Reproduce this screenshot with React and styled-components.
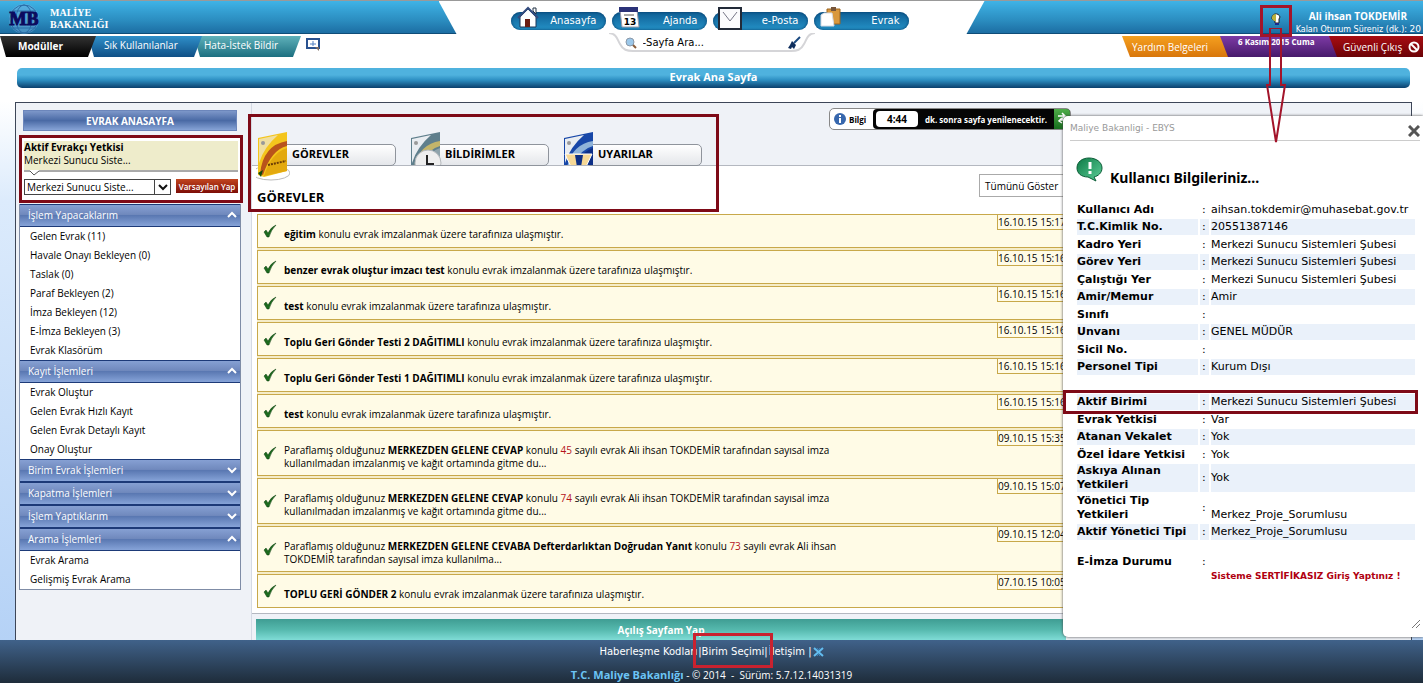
import React from 'react'
import styled, { createGlobalStyle, css } from 'styled-components'

const sans = '"Open Sans", "Noto Sans", sans-serif'
const wide = '"DejaVu Sans", sans-serif'

const menu = [
  {
    title: 'İşlem Yapacaklarım',
    open: true,
    items: ['Gelen Evrak (11)', 'Havale Onayı Bekleyen (0)', 'Taslak (0)', 'Paraf Bekleyen (2)', 'İmza Bekleyen (12)', 'E-İmza Bekleyen (3)', 'Evrak Klasörüm'],
  },
  {
    title: 'Kayıt İşlemleri',
    open: true,
    items: ['Evrak Oluştur', 'Gelen Evrak Hızlı Kayıt', 'Gelen Evrak Detaylı Kayıt', 'Onay Oluştur'],
  },
  { title: 'Birim Evrak İşlemleri', items: [] },
  { title: 'Kapatma İşlemleri', items: [] },
  { title: 'İşlem Yaptıklarım', items: [] },
  { title: 'Arama İşlemleri', open: true, items: ['Evrak Arama', 'Gelişmiş Evrak Arama'] },
]

const waiting = 'konulu evrak imzalanmak üzere tarafınıza ulaşmıştır.'

const tasks = [
  { date: '16.10.15 15:17', subject: 'eğitim' },
  { date: '16.10.15 15:16', subject: 'benzer evrak oluştur imzacı test' },
  { date: '16.10.15 15:16', subject: 'test' },
  { date: '16.10.15 15:16', subject: 'Toplu Geri Gönder Testi 2 DAĞITIMLI' },
  { date: '16.10.15 15:16', subject: 'Toplu Geri Gönder Testi 1 DAĞITIMLI' },
  { date: '16.10.15 15:16', subject: 'test' },
  { date: '09.10.15 15:35', subject: 'MERKEZDEN GELENE CEVAP', no: 45, tail: ['sayılı evrak Ali ihsan TOKDEMİR tarafından sayısal imza', 'kullanılmadan imzalanmış ve kağıt ortamında gitme du...'] },
  { date: '09.10.15 15:07', subject: 'MERKEZDEN GELENE CEVAP', no: 74, tail: ['sayılı evrak Ali ihsan TOKDEMİR tarafından sayısal imza', 'kullanılmadan imzalanmış ve kağıt ortamında gitme du...'] },
  { date: '09.10.15 12:04', subject: 'MERKEZDEN GELENE CEVABA Defterdarlıktan Doğrudan Yanıt', no: 73, tail: ['sayılı evrak Ali ihsan', 'TOKDEMİR tarafından sayısal imza kullanılma...'] },
  { date: '07.10.15 10:05', subject: 'TOPLU GERİ GÖNDER 2' },
]

const user = [
  ['Kullanıcı Adı', 'aihsan.tokdemir@muhasebat.gov.tr'],
  ['T.C.Kimlik No.', '20551387146'],
  ['Kadro Yeri', 'Merkezi Sunucu Sistemleri Şubesi'],
  ['Görev Yeri', 'Merkezi Sunucu Sistemleri Şubesi'],
  ['Çalıştığı Yer', 'Merkezi Sunucu Sistemleri Şubesi'],
  ['Amir/Memur', 'Amir'],
  ['Sınıfı', ''],
  ['Unvanı', 'GENEL MÜDÜR'],
  ['Sicil No.', ''],
  ['Personel Tipi', 'Kurum Dışı'],
  null,
  ['Aktif Birimi', 'Merkezi Sunucu Sistemleri Şubesi'],
  ['Evrak Yetkisi', 'Var'],
  ['Atanan Vekalet', 'Yok'],
  ['Özel İdare Yetkisi', 'Yok'],
  ['Askıya Alınan\nYetkileri', 'Yok'],
  ['Yönetici Tip\nYetkileri', 'Merkez_Proje_Sorumlusu'],
  ['Aktif Yönetici Tipi', 'Merkez_Proje_Sorumlusu'],
]

function App() {
  return (
    <Page>
      <Global />
      <Header>
        <Brand>
          <LogoIcon />
          <BrandName>MALİYE<br />BAKANLIĞI</BrandName>
        </Brand>
        <Nav>
          <NavLink href="#"><NavIcon><HouseIcon /></NavIcon>Anasayfa</NavLink>
          <NavLink href="#"><NavIcon><CalendarIcon /></NavIcon>Ajanda</NavLink>
          <NavLink href="#"><NavIcon><MailIcon /></NavIcon>e-Posta</NavLink>
          <NavLink href="#"><NavIcon><ClipboardIcon /></NavIcon>Evrak</NavLink>
        </Nav>
        <UserArea>
          <UserButton aria-label="Kullanıcı Bilgileri">
            <PersonIcon />
            <ArrowMark viewBox="0 0 20 116">
              <path d="M4 0V57H1L10 114L19 57H15V0Z" />
            </ArrowMark>
          </UserButton>
          <UserText>
            <UserName>Ali ihsan TOKDEMİR</UserName>
            <Session>Kalan Oturum Süreniz (dk.): <b>20</b></Session>
          </UserText>
        </UserArea>
      </Header>

      <SubBar>
        <TabGroup>
          <TopTab href="#" $kind="black">Modüller</TopTab>
          <TopTab href="#" $kind="blue">Sık Kullanılanlar</TopTab>
          <TopTab href="#" $kind="teal">Hata-İstek Bildir</TopTab>
          <AddButton aria-label="Ekle"><AddIcon /></AddButton>
        </TabGroup>
        <Search>
          <SearchEdge />
          <GlassIcon />
          <SearchInput aria-label="Sayfa Ara" defaultValue="-Sayfa Ara..." />
          <BrushIcon />
        </Search>
        <RightTabs>
          <SideTab href="#" $kind="orange">Yardım Belgeleri</SideTab>
          <SideTab as="div" $kind="purple">6 Kasım 2015 Cuma</SideTab>
          <SideTab href="#" $kind="red">Güvenli Çıkış <BanIcon /></SideTab>
        </RightTabs>
      </SubBar>

      <TitleBar>Evrak Ana Sayfa</TitleBar>

      <Panel>
        <Sidebar>
          <HomeButton>EVRAK ANASAYFA</HomeButton>
          <RoleBox>
            <RoleNote>
              <b>Aktif Evrakçı Yetkisi</b>
              <span>Merkezi Sunucu Siste...</span>
            </RoleNote>
            <Notch viewBox="0 0 214 6"><path d="M0 1H6L10 5L15 1H214" /></Notch>
            <RoleForm>
              <SelectWrap>
                <RoleSelect aria-label="Aktif Evrakçı Yetkisi">
                  <option>Merkezi Sunucu Siste...</option>
                </RoleSelect>
                <SelectArrow><Chevron down dark /></SelectArrow>
              </SelectWrap>
              <DefaultButton>Varsayılan Yap</DefaultButton>
            </RoleForm>
          </RoleBox>
          <Menu>
            {menu.map((group) => (
              <div key={group.title}>
                <GroupHead aria-expanded={!!group.open}>
                  {group.title}
                  <Chevron down={!group.open} />
                </GroupHead>
                {group.items.map((item) => <MenuLink href="#" key={item}>{item}</MenuLink>)}
              </div>
            ))}
          </Menu>
        </Sidebar>

        <Main>
          <TabsArea>
            <TypeTab><FolderIcon kind="task" />GÖREVLER</TypeTab>
            <TypeTab><FolderIcon kind="clock" />BİLDİRİMLER</TypeTab>
            <TypeTab><FolderIcon kind="warn" />UYARILAR</TypeTab>
            <Info>
              <InfoLabel><InfoIcon />Bilgi</InfoLabel>
              <InfoBody>
                <Timer>4:44</Timer>
                <span>dk. sonra sayfa yenilenecektir.</span>
                <Refresh aria-label="Yenile"><RefreshIcon /></Refresh>
              </InfoBody>
            </Info>
          </TabsArea>
          <ListBox>
            <ListHead>
              <h2>GÖREVLER</h2>
              <ShowAll>Tümünü Göster</ShowAll>
            </ListHead>
            <List>
              {tasks.map((task, i) => (
                <Task key={i}>
                  <CheckIcon />
                  {task.no ? (
                    <p>
                      Paraflamış olduğunuz <b>{task.subject}</b> konulu <em>{task.no}</em> {task.tail[0]}
                      <br />
                      {task.tail[1]}
                    </p>
                  ) : (
                    <p><b>{task.subject}</b> {waiting}</p>
                  )}
                  <time>{task.date}</time>
                </Task>
              ))}
            </List>
          </ListBox>
          <OpenPage>Açılış Sayfam Yap</OpenPage>
          <TabsMark />
        </Main>
      </Panel>

      <Footer>
        <FooterLinks>
          <a href="#">Haberleşme Kodları</a>
          <UnitLink href="#">|Birim Seçimi|</UnitLink>
          <a href="#">İletişim |</a>
          <CrossIcon />
        </FooterLinks>
        <Copyright><b>T.C. Maliye Bakanlığı</b> - © 2014 &nbsp;-&nbsp; <span>Sürüm: 5.7.12.14031319</span></Copyright>
      </Footer>

      <Popup role="dialog" aria-label="Kullanıcı Bilgileriniz">
        <PopupTop>
          Maliye Bakanligi - EBYS
          <CloseButton aria-label="Kapat">
            <svg width="12" height="12" viewBox="0 0 12 12"><path d="M1 1L11 11M11 1L1 11" stroke="#555" strokeWidth="3" /></svg>
          </CloseButton>
        </PopupTop>
        <PopupHead>
          <BubbleIcon />
          <h3>Kullanıcı Bilgileriniz...</h3>
        </PopupHead>
        <UserTable>
          <tbody>
            {user.map((row, i) => row ? (
              <UserRow key={i} $low={row[0].startsWith('Yönetici')}>
                <th scope="row">{row[0]}{row[0] === 'Aktif Birimi' && <RowMark />}</th>
                <td>:</td>
                <td>{row[1]}</td>
              </UserRow>
            ) : <UserRow key={i}><td colSpan="3" /></UserRow>)}
            <SignRow>
              <th scope="row">E-İmza Durumu</th>
              <td>:</td>
              <td>Sisteme SERTİFİKASIZ Giriş Yaptınız !</td>
            </SignRow>
          </tbody>
        </UserTable>
        <Grip viewBox="0 0 10 10"><path d="M1 9L9 1M5 9L9 5" /></Grip>
      </Popup>
    </Page>
  )
}

/* icons */

function LogoIcon() {
  return (
    <svg width="36" height="32" viewBox="0 0 36 32">
      <circle cx="18" cy="16" r="15" fill="#6fb2e2" opacity="0.5" />
      <g fill="none" stroke="#2a6ea8" strokeWidth="1">
        <circle cx="18" cy="16" r="14" />
        <ellipse cx="18" cy="16" rx="8" ry="14" />
        <path d="M6 8H30M6 25H30" />
      </g>
      <text x="18" y="22" textAnchor="middle" fontFamily="Liberation Serif, serif" fontWeight="bold" fontSize="18" fill="#0b0b5e" stroke="#0b0b5e">MB</text>
    </svg>
  )
}

function HouseIcon() {
  return (
    <svg width="24" height="24" viewBox="0 0 24 24">
      <path d="M17 2H20V8L17 5Z" fill="#fff" stroke="#234" />
      <path d="M4 11L12 3L20 11V21H4Z" fill="#fff" stroke="#1d3658" />
      <path d="M2 12L12 2L22 12" fill="none" stroke="#334b7e" strokeWidth="2" />
      <path d="M9 13H14V21H9Z" fill="#6b1d12" />
    </svg>
  )
}

function CalendarIcon() {
  return (
    <svg width="24" height="24" viewBox="0 0 24 24">
      <path d="M3 4H20L22 21H5Z" fill="#fff" stroke="#99a" />
      <path d="M2 1H21V6H2Z" fill="#2b3278" />
      <path d="M7 9H17" stroke="#555" />
      <text x="13" y="19" textAnchor="middle" fontFamily="DejaVu Sans, sans-serif" fontWeight="bold" fontSize="9">13</text>
    </svg>
  )
}

function MailIcon() {
  return (
    <svg width="24" height="24" viewBox="0 0 24 24">
      <path d="M1 2H23V23H1Z" fill="#fbfbfd" stroke="#222a38" strokeWidth="2" />
      <path d="M5 6L12 15L19 6" fill="none" stroke="#778" strokeWidth="1" />
    </svg>
  )
}

function ClipboardIcon() {
  return (
    <svg width="24" height="24" viewBox="0 0 24 24">
      <path d="M8 3H21V18H8Z" fill="#d9983d" stroke="#9c6421" />
      <path d="M12 1H17V5H12Z" fill="#76553a" />
      <path d="M2 9L5 7H13L15 20H2Z" fill="#fff" stroke="#d5dbe5" />
    </svg>
  )
}

function PersonIcon() {
  return (
    <svg width="12" height="14" viewBox="0 0 12 14">
      <path d="M2 7A4 4 0 0 1 10 5L9 7V11H5V9Z" fill="#fff" stroke="#222" />
      <path d="M2 7A4 4 0 0 1 6 2V9H4Z" fill="#b9b13b" />
      <path d="M5 11H9V13H5Z" fill="#1a2a8c" />
    </svg>
  )
}

function AddIcon() {
  return (
    <svg width="14" height="14" viewBox="0 0 14 14">
      <path d="M1 1H13V10H1Z" fill="#fff" stroke="#2a5290" strokeWidth="2" />
      <path d="M7 3V8M4 6H10" stroke="#4f7ec2" />
      <path d="M9 9H13V13Z" fill="#7d6c63" />
    </svg>
  )
}

function GlassIcon() {
  return (
    <svg width="12" height="12" viewBox="0 0 12 12">
      <path d="M7 7L11 11" stroke="#8a5d3a" strokeWidth="2" />
      <circle cx="5" cy="5" r="4" fill="#9cc8ea" stroke="#8a98a8" />
    </svg>
  )
}

function BrushIcon() {
  return (
    <svg width="14" height="14" viewBox="0 0 14 14">
      <path d="M13 1L7 7" stroke="#1a4a80" strokeWidth="2" />
      <path d="M5 5L9 9L7 13L5 11L4 13L1 12L3 9Z" fill="#0e2d5c" />
    </svg>
  )
}

function BanIcon() {
  return (
    <svg width="12" height="12" viewBox="0 0 12 12">
      <g fill="none" stroke="#fff" strokeWidth="2"><circle cx="6" cy="6" r="4.5" /><path d="M3 3L9 9" /></g>
    </svg>
  )
}

function Chevron({ down, dark }) {
  return (
    <svg width="10" height="8" viewBox="0 0 10 8">
      <path d={down ? 'M1 2L5 6L9 2' : 'M1 6L5 2L9 6'} fill="none" stroke={dark ? '#111' : '#fff'} strokeWidth="2" />
    </svg>
  )
}

const folderColors = {
  task: ['#f4c51d', '#b9541b', '#e3a90f'],
  clock: ['#5f7f8c', '#c3b56a', '#8fa3ab'],
  warn: ['#1747a8', '#8fb3d9', '#0d2f86'],
}

function FolderIcon({ kind }) {
  const [fill, band, deep] = folderColors[kind]
  return (
    <svg width="34" height="50" viewBox="0 0 34 50">
      {kind === 'task' && <ellipse cx="15" cy="42" rx="19" ry="7" fill="#fff" stroke="#bbb" />}
      <path d="M2 7L31 1V40L8 46L2 44Z" fill={fill} />
      <path d="M3 8L22 4Q8 16 3 32Z" fill={kind === 'task' ? '#f0dfa0' : '#e9edf1'} />
      <path d="M4 43Q7 14 31 10V15Q15 19 7 44Z" fill={band} />
      <path d="M31 17Q15 22 8 45L31 40Z" fill={deep} />
      <circle cx="7" cy="12" r="2" fill="#999" />
      {kind === 'task' && <path d="M12 34L30 30" stroke="#6b3c05" strokeWidth="2" strokeDasharray="2 1" />}
      {kind === 'task' && <path d="M2 42L7 39L5 46Z" fill="#104a10" />}
      {kind === 'clock' && (
        <g>
          <circle cx="19" cy="32" r="13" fill="#eee" stroke="#b5b9bd" />
          <path d="M18 24V33H25" fill="none" stroke="#222" strokeWidth="2" />
        </g>
      )}
      {kind === 'warn' && (
        <g>
          <path d="M3 23H30L23 38H10Z" fill="#f6d896" stroke="#fff" />
          <path d="M13 24H21L19 36H15Z" fill="#0d2f86" />
        </g>
      )}
    </svg>
  )
}

function CheckIcon() {
  return (
    <svg width="14" height="14" viewBox="0 0 14 14">
      <path d="M1 8L3 6L5 9Q8 3 13 1Q8 6 6 13H4Z" fill="#1c6a1c" stroke="#0e3f12" strokeWidth="0.5" />
    </svg>
  )
}

function InfoIcon() {
  return (
    <svg width="12" height="12" viewBox="0 0 12 12">
      <circle cx="6" cy="6" r="6" fill="#3767ad" />
      <path d="M6 2V4M6 5V10" stroke="#fff" strokeWidth="2" />
    </svg>
  )
}

function RefreshIcon() {
  return (
    <svg width="10" height="12" viewBox="0 0 10 12">
      <path d="M1 4H7M5 1L8 4L5 7M9 8H3M5 6L2 9L5 11" fill="none" stroke="#fff" strokeWidth="1.5" />
    </svg>
  )
}

function CrossIcon() {
  return (
    <svg width="11" height="10" viewBox="0 0 11 10">
      <path d="M1 1L10 9M10 1L1 9" stroke="#63bdf0" strokeWidth="2" />
      <path d="M4 1L5.500 3L7 1M4 9L5.500 7L7 9" fill="none" stroke="#3c86c0" />
    </svg>
  )
}

function BubbleIcon() {
  return (
    <svg width="27" height="25" viewBox="0 0 27 25">
      <defs>
        <linearGradient id="bubble" x1="0" y1="0" x2="1" y2="1">
          <stop offset="0" stopColor="#0c7a45" />
          <stop offset="1" stopColor="#5fd09a" />
        </linearGradient>
      </defs>
      <path d="M13 1C20 1 26 5 26 11C26 16 22 19 18 20L20 24L12 20C5 20 1 16 1 11C1 5 6 1 13 1Z" fill="url(#bubble)" stroke="#0b5c36" />
      <path d="M14 5V12M14 14V17" stroke="#fff" strokeWidth="3" />
    </svg>
  )
}

function SearchEdge() {
  return (
    <Edge viewBox="0 0 206 20" preserveAspectRatio="none">
      <path d="M0 0C8 1 8 6 11 11C14 17 18 18 24 18H182C188 18 192 17 195 11C198 6 198 1 206 0" fill="#fff" stroke="#d5d5d8" strokeWidth="2" />
    </Edge>
  )
}

/* styles */

const Global = createGlobalStyle`
  * { box-sizing: border-box; }
  body { margin: 0; background: #fff; font-family: ${sans}; font-size: 10px; color: #000; }
  a { color: inherit; text-decoration: none; }
  button { border: 0; padding: 0; background: none; font: inherit; color: inherit; cursor: pointer; }
  h2, h3, p { margin: 0; }
  svg { flex: none; }
`

const mark = css`
  position: absolute;
  border: 3px solid #7e0a17;
  pointer-events: none;
`

const Page = styled.div`
  position: relative;
  overflow: hidden;
  border-top: 1px solid #999;
  background: linear-gradient(#fff 100px, #dcebfc 200px, #b5d2f6 640px);
`

const Header = styled.header`
  display: grid;
  grid-template-columns: minmax(0, 1fr) 546px minmax(0, 1fr);
  height: 33px;
  background: linear-gradient(#3fb3e6, #2b8dc0 60%, #1c6ea3);
  border-bottom: 1px solid #0f4d78;
`

const Brand = styled.div`
  display: flex;
  align-items: center;
  gap: 8px;
  padding-left: 6px;
`

const BrandName = styled.div`
  font: bold 10px/12px "Liberation Serif", serif;
  color: #fff;
`

const Nav = styled.nav`
  display: flex;
  justify-content: center;
  gap: 6px;
  height: 33px;
  padding: 11px 4px 0 0;
  background: #fff;
  clip-path: polygon(0 0, 100% 0, calc(100% - 18px) 100%, 18px 100%);
`

const NavLink = styled.a`
  display: flex;
  align-items: center;
  justify-content: flex-end;
  position: relative;
  width: 95px;
  height: 18px;
  padding-right: 9px;
  border-radius: 9px;
  background: linear-gradient(#0f5f95, #2491c6);
  box-shadow: inset 0 0 3px #053a66;
  color: #fff;
  font: 10px/18px ${wide};
`

const NavIcon = styled.span`
  position: absolute;
  left: 5px;
  top: -6px;
  height: 24px;
`

const UserArea = styled.div`
  display: flex;
  justify-content: flex-end;
  gap: 4px;
  color: #fff;
`

const UserButton = styled.button`
  position: relative;
  z-index: 5;
  display: flex;
  align-items: center;
  justify-content: center;
  width: 32px;
  height: 32px;
  margin-top: 4px;
  padding-bottom: 4px;
  border: 3px solid #a3142a;
`

const ArrowMark = styled.svg`
  position: absolute;
  left: 3px;
  top: 20px;
  width: 20px;
  height: 116px;
  fill: none;
  stroke: #a3142a;
  stroke-width: 2;
  pointer-events: none;
`

const UserText = styled.div`
  padding: 8px 2px 0 0;
  text-align: right;
  white-space: nowrap;
`

const UserName = styled.div`
  padding-right: 14px;
  font-size: 10px;
  line-height: 14px;
  font-weight: bold;
`

const Session = styled.div`
  font: 8px/12px ${wide};

  b {
    font-size: 9px;
    font-weight: normal;
  }
`

const SubBar = styled.div`
  display: flex;
  justify-content: space-between;
  margin-top: 2px;
  height: 21px;
`

const TabGroup = styled.div`
  display: flex;
  flex: 1;
`

const tabColors = {
  black: 'linear-gradient(#333, #000)',
  blue: 'linear-gradient(#2f8fc9, #0f4f85)',
  teal: 'linear-gradient(#5fb1ba, #1c6f80)',
  orange: 'linear-gradient(#f5a01f, #d8760b)',
  purple: 'linear-gradient(#7d3aa5, #471a6b)',
  red: 'linear-gradient(#a80d12, #6b0206)',
}

const topTabs = {
  black: css`width: 96px; z-index: 3; padding-left: 18px; font-weight: bold; line-height: 20px;`,
  blue: css`width: 114px; z-index: 2; padding-left: 16px;`,
  teal: css`width: 107px; z-index: 1; padding-left: 10px;`,
}

const TopTab = styled.a`
  position: relative;
  margin-right: -8px;
  background: ${(p) => tabColors[p.$kind]};
  clip-path: polygon(0 0, 100% 0, calc(100% - 8px) 100%, 6px 100%);
  color: #fff;
  font-size: 10px;
  line-height: 18px;
  white-space: nowrap;
  ${(p) => topTabs[p.$kind]}
`

const AddButton = styled.button`
  height: 14px;
  margin: 2px 0 0 13px;
`

const Search = styled.div`
  position: relative;
  display: flex;
  align-items: center;
  width: 206px;
  height: 20px;
  margin-top: -3px;
  padding: 0 14px 0 16px;

  svg:not(:first-child) { position: relative; }
`

const Edge = styled.svg`
  position: absolute;
  inset: 0;
  width: 100%;
  height: 100%;
`

const SearchInput = styled.input`
  position: relative;
  flex: 1;
  min-width: 0;
  padding: 0 6px;
  border: 0;
  background: none;
  font: 10px/16px ${wide};
`

const RightTabs = styled(TabGroup)`
  justify-content: flex-end;
`

const SideTab = styled.a`
  display: flex;
  justify-content: space-between;
  align-items: center;
  width: ${(p) => (p.$kind === 'red' ? '94px' : p.$kind === 'purple' ? '117px' : '106px')};
  margin-left: ${(p) => (p.$kind === 'orange' ? 0 : '-8px')};
  padding: 0 3px 0 ${(p) => (p.$kind === 'purple' ? '18px' : p.$kind === 'red' ? '14px' : '10px')};
  background: ${(p) => tabColors[p.$kind]};
  clip-path: polygon(0 0, 100% 0, 100% 100%, 8px 100%);
  color: #fff;
  font-size: 10px;
  white-space: nowrap;
  ${(p) => p.$kind === 'purple' && 'align-items: flex-start; font-size: 8px; font-weight: bold;'}
`

const TitleBar = styled.h1`
  height: 20px;
  margin: 11px 13px 14px 17px;
  border-radius: 5px;
  background: linear-gradient(#4fb2de 0 35%, #2d8fc2 60%, #0a3f6c);
  color: #fff;
  font-size: 11px;
  line-height: 17px;
  text-align: center;
`

const Panel = styled.div`
  display: grid;
  grid-template-columns: 236px minmax(0, 1fr) 340px;
  margin: 0 11px 0 15px;
  border: 1px solid #3d4658;
  border-bottom: 0;
  background: #eff2f7;
`

const Sidebar = styled.aside`
  padding: 7px 10px 0 3px;
  border-right: 1px solid #d5dae4;
`

const HomeButton = styled.button`
  display: block;
  width: 214px;
  height: 21px;
  margin: 0 4px 4px;
  border: 1px solid #6c86bb;
  background: linear-gradient(#7d97c9, #4a6aa5 50%, #86a3d6);
  color: #fff;
  font-weight: bold;
`

const RoleBox = styled.div`
  width: 224px;
  height: 68px;
  padding: 3px 2px;
  border: 3px solid #7e0a17;
  background: #fff;
`

const RoleNote = styled.div`
  display: flex;
  flex-direction: column;
  height: 29px;
  background: #eeeccb;
  line-height: 13px;
`

const Notch = styled.svg`
  display: block;
  width: 100%;
  height: 6px;
  fill: none;
  stroke: #555;
`

const RoleForm = styled.div`
  display: flex;
  gap: 5px;
  margin-top: 3px;
`

const SelectWrap = styled.div`
  position: relative;
  flex: 1;
`

const RoleSelect = styled.select`
  appearance: none;
  width: 100%;
  height: 16px;
  padding: 0 2px;
  border: 1px solid #444;
  border-radius: 0;
  background: #fff;
  color: #000;
  font: 10px/14px ${sans};
`

const SelectArrow = styled.span`
  position: absolute;
  right: 0;
  top: 0;
  display: flex;
  align-items: center;
  justify-content: center;
  width: 17px;
  height: 16px;
  border: 1px solid #444;
  pointer-events: none;
`

const DefaultButton = styled.button`
  width: 62px;
  height: 14px;
  background: linear-gradient(#c2451f, #7d0d07);
  color: #fff;
  font-size: 8px;
  font-weight: 600;
  white-space: nowrap;
`

const Menu = styled.nav`
  margin-top: 1px;
  border: 1px solid #7f8ca6;
  border-top: 0;
  background: #fff;
`

const GroupHead = styled.button`
  display: flex;
  align-items: center;
  justify-content: space-between;
  width: 100%;
  height: 23px;
  padding: 0 3px 2px 8px;
  border: solid #1d3a78;
  border-width: 1px 0;
  background: linear-gradient(#86a0d3, #7089bd 45%, #5a78b2 50%, #86a3d8);
  color: #fff;
`

const MenuLink = styled.a`
  display: block;
  padding-left: 10px;
  line-height: 19px;
`

const Main = styled.main`
  position: relative;
  display: flex;
  flex-direction: column;
`

const TabsArea = styled.div`
  display: flex;
  align-items: flex-start;
  height: 62px;
  padding: 28px 0 0 4px;
`

const TypeTab = styled.button`
  display: flex;
  align-items: flex-start;
  position: relative;
  z-index: 1;
  width: 141px;
  height: 34px;
  margin-right: 12px;
  padding: 13px 0 0 36px;
  font-size: 11px;
  line-height: 20px;
  font-weight: bold;

  &::before {
    content: '';
    position: absolute;
    left: 24px;
    right: 1px;
    top: 13px;
    height: 20px;
    border: 1px solid #8f949c;
    border-radius: 5px;
    background: linear-gradient(#fff, #e4e6ea);
    z-index: -1;
  }

  svg {
    position: absolute;
    left: 0;
    top: 0;
  }

  &:not(:first-child) svg {
    clip-path: inset(0 0 16px 0);
  }
`

const Info = styled.div`
  display: flex;
  margin: -23px 0 0 auto;
  width: 242px;
  height: 22px;
  border: 1px solid #888;
  border-radius: 5px;
  overflow: hidden;
  background: #fff;
  font-size: 8px;
  font-weight: bold;
`

const InfoLabel = styled.div`
  display: flex;
  flex: none;
  align-items: center;
  gap: 3px;
  width: 43px;
  padding-left: 4px;
`

const InfoBody = styled.div`
  display: flex;
  flex: 1;
  align-items: center;
  justify-content: space-between;
  gap: 4px;
  border-radius: 4px 0 0 4px;
  background: #050505;
  color: #fff;
  white-space: nowrap;
`

const Timer = styled.span`
  width: 42px;
  margin-left: 3px;
  border-radius: 4px;
  background: #fff;
  color: #000;
  font-size: 10px;
  line-height: 16px;
  text-align: center;
`

const Refresh = styled.button`
  width: 16px;
  height: 22px;
  background: linear-gradient(#51b04a, #146b1c);
`

const ListBox = styled.section`
  padding: 0 5px 5px;
  border: solid #b4b8c0;
  border-width: 1px 0;
  background: #fff;
`

const ListHead = styled.div`
  display: flex;
  justify-content: space-between;
  height: 48px;
  padding-top: 8px;

  h2 {
    padding-top: 14px;
    font-size: 13px;
    line-height: 18px;
  }
`

const ShowAll = styled.button`
  width: 87px;
  height: 23px;
  padding: 0 5px;
  border: 1px solid #aaa;
  background: #fff;
  text-align: left;
`

const List = styled.ul`
  display: flex;
  flex-direction: column;
  gap: 2px;
  margin: 0;
  padding: 0;
  list-style: none;
  background: #f5ecc8;
`

const Task = styled.li`
  display: flex;
  align-items: center;
  gap: 7px;
  min-height: 34px;
  padding-left: 5px;
  border: 1px solid #c8a84a;
  background: #fffbe6;

  p {
    flex: 1;
    align-self: flex-start;
    padding: 13px 0 5px;
    line-height: 13px;
  }

  em {
    color: #b5121b;
    font-style: normal;
  }

  time {
    align-self: flex-start;
    width: 68px;
    border: solid #c8a84a;
    border-width: 0 0 1px 1px;
    line-height: 14px;
    white-space: nowrap;
  }
`

const OpenPage = styled.button`
  height: 21px;
  margin: 5px 5px 0 4px;
  background: linear-gradient(#3f9d93, #55b8ad 50%, #7fdcd6);
  color: #fff;
  font-weight: bold;
`

const TabsMark = styled.div`
  ${mark}
  z-index: 2;
  left: -4px;
  top: 11px;
  width: 471px;
  height: 98px;
`

const Footer = styled.footer`
  display: flex;
  flex-direction: column;
  align-items: center;
  height: 43px;
  padding-top: 4px;
  background: linear-gradient(#40628a, #1e2c3a);
  color: #fff;
`

const FooterLinks = styled.div`
  display: flex;
  align-items: center;
  gap: 1px;
  height: 16px;
  font: 10px/16px ${wide};
`

const UnitLink = styled.a`
  position: relative;

  &::after {
    content: '';
    ${mark}
    border-color: #c9222f;
    inset: -11px -5px -8px -5px;
  }
`

const Copyright = styled.div`
  margin-top: 8px;
  font-size: 10px;
  line-height: 14px;

  b { color: #6cc4f5; font-size: 11px; }
`

const Popup = styled.section`
  position: absolute;
  z-index: 3;
  top: 115px;
  right: 0;
  width: 360px;
  height: 521px;
  border-radius: 5px 0 0 5px;
  background: #fff;
  box-shadow: 0 0 3px #444;
`

const PopupTop = styled.div`
  display: flex;
  justify-content: space-between;
  align-items: center;
  height: 25px;
  margin: 0 3px 0 7px;
  border-bottom: 1px solid #ccc;
  color: #999;
  font: 9px/24px ${wide};
`

const CloseButton = styled.button`
  height: 12px;
`

const PopupHead = styled.div`
  display: flex;
  gap: 7px;
  height: 59px;
  padding: 16px 0 0 13px;

  h3 {
    padding-top: 12px;
    font: bold 14px/18px "Noto Sans", sans-serif;
  }
`

const UserTable = styled.table`
  width: 342px;
  margin-left: 12px;
  border-spacing: 2px;
  table-layout: fixed;
  font: 11px/14px ${wide};

  th, td { padding: 0; text-align: left; vertical-align: middle; white-space: nowrap; }
  th { width: 121px; white-space: pre; }
  th + td { width: 9px; padding-left: 2px; }
`

const UserRow = styled.tr`
  position: relative;
  height: 15px;

  &:nth-child(even) {
    height: 16px;

    td, th { background: #eaf1fa; }
  }

  ${(p) => p.$low && 'td:last-child { vertical-align: bottom; }'}
`

const RowMark = styled.span`
  ${mark}
  left: -14px;
  right: -3px;
  top: -4px;
  bottom: -4px;
`

const SignRow = styled.tr`
  th, td { padding-top: 13px; vertical-align: top; }

  td:last-child {
    padding-top: 27px;
    color: #b00010;
    font-size: 9px;
    font-weight: bold;
  }
`

const Grip = styled.svg`
  position: absolute;
  right: 2px;
  bottom: 8px;
  width: 10px;
  height: 10px;
  stroke: #777;
`

export default App
